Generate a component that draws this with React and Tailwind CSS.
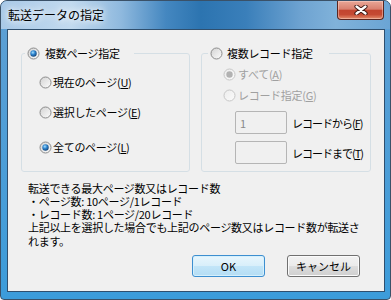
import { useId } from "react";

const JP = "[font-family:'Noto_Sans_CJK_JP','Noto_Sans',sans-serif]";

function Radio({ checked, disabled }) {
  const id = useId().replace(/:/g, "");
  return (
    <svg width="13" height="13" viewBox="0 0 13 13" className="shrink-0">
      <defs>
        <linearGradient id={id + "b"} x1="0" y1="0" x2="1" y2="1">
          <stop offset="0" stopColor={disabled ? "#ececec" : "#d2d2d2"} />
          <stop offset="1" stopColor={disabled ? "#fbfbfb" : "#fdfdfd"} />
        </linearGradient>
        <radialGradient id={id + "d"} cx="0.4" cy="0.35" r="0.7">
          <stop offset="0" stopColor="#a9e1ff" />
          <stop offset="0.45" stopColor="#2f86d0" />
          <stop offset="1" stopColor="#143f70" />
        </radialGradient>
      </defs>
      <circle
        cx="6.5"
        cy="6.5"
        r="5.5"
        fill={`url(#${id}b)`}
        stroke={disabled ? "#c6c6c6" : "#8b8b8b"}
      />
      {checked && (
        <circle
          cx="6.5"
          cy="6.5"
          r="3.2"
          fill={disabled ? "#b2b2b2" : `url(#${id}d)`}
        />
      )}
    </svg>
  );
}

function Key({ c }) {
  return (
    <>
      (<u>{c}</u>)
    </>
  );
}

export default function App() {
  return (
    <div
      className={`w-[391px] h-[300px] flex flex-col border border-[#3a5168] rounded-t-[7px] rounded-b-[4px] overflow-hidden bg-[linear-gradient(180deg,#5f9fd3,#3c9cda)] text-black ${JP}`}
    >
      {/* title bar */}
      <div className="h-[28px] flex justify-between bg-[linear-gradient(90deg,#a9c9e7_0px,#c2daef_70px,#8fb9de_120px,#4487c0_165px,#2c74b0_200px,#3a7fba_245px,#6ea3d1_300px,#80b2da_335px,#6aa4d4_391px)]">
        <span className="pl-[7px] self-center text-[12px] leading-[16px] [text-shadow:0_0_6px_#fff,0_0_10px_#fff]">
          転送データの指定
        </span>
        <div className="mr-[6px] w-[47px] h-[19px] flex items-center justify-center border border-t-0 border-[#5a2620] rounded-b-[4px] bg-[linear-gradient(180deg,#e9a797_0%,#d9806f_45%,#c2452f_52%,#c54a33_75%,#e38d6c_100%)] shadow-[inset_0_0_0_1px_rgba(255,220,210,0.45)]">
          <svg width="14" height="10" viewBox="0 0 14 10">
            <path d="M2.5 1.5 L11.5 8.5 M11.5 1.5 L2.5 8.5" stroke="#3b1712" strokeWidth="4.2" strokeLinecap="round" />
            <path d="M2.5 1.5 L11.5 8.5 M11.5 1.5 L2.5 8.5" stroke="#ffffff" strokeWidth="2.3" strokeLinecap="round" />
          </svg>
        </div>
      </div>

      {/* client area */}
      <div className="flex-1 pl-[6px] pr-[5px] pb-[7px] flex">
        <div className="flex-1 border border-[#2f4f6e] bg-[#f0f0f0] flex flex-col text-[11px] leading-[16px] tracking-[-0.3px]">
          <div className="pt-[15px] pl-[13px] flex gap-[11px]">
            <fieldset className="w-[169px] h-[127px] min-w-0 border border-[#d5dfe5] rounded-[3px]">
              <legend className="ml-[3px] pl-[2px] pr-[14px]">
                <span className="flex items-center gap-[5px] h-[16px] whitespace-nowrap">
                  <Radio checked />
                  複数ページ指定
                </span>
              </legend>
              <div className="pl-[17px] flex flex-col whitespace-nowrap">
                <div className="mt-[13px] h-[16px] flex items-center gap-[1px]">
                  <Radio />
                  <span>現在のページ<Key c="U" /></span>
                </div>
                <div className="mt-[14px] h-[16px] flex items-center gap-[1px]">
                  <Radio />
                  <span>選択したページ<Key c="E" /></span>
                </div>
                <div className="mt-[19px] h-[16px] flex items-center gap-[1px]">
                  <Radio checked />
                  <span>全てのページ<Key c="L" /></span>
                </div>
              </div>
            </fieldset>

            <fieldset className="w-[170px] h-[127px] min-w-0 border border-[#d5dfe5] rounded-[3px]">
              <legend className="ml-[6px] pl-[2px] pr-[16px]">
                <span className="flex items-center gap-[4px] h-[16px] whitespace-nowrap">
                  <Radio />
                  複数レコード指定
                </span>
              </legend>
              <div className="flex flex-col text-[#a0a0a0] whitespace-nowrap">
                <div className="pl-[21px] mt-[5px] h-[16px] flex items-center gap-[2px]">
                  <Radio checked disabled />
                  <span>すべて<Key c="A" /></span>
                </div>
                <div className="pl-[21px] mt-[5px] h-[16px] flex items-center gap-[2px]">
                  <Radio disabled />
                  <span>レコード指定<Key c="G" /></span>
                </div>
                <div className="pl-[33px] mt-[8px] flex items-center gap-[5px]">
                  <div className="w-[52px] h-[23px] shrink-0 border border-[#b5b5b5] rounded-[2px] bg-[#f0f0f0] pl-[4px] flex items-center text-[#8a8a8a]">
                    1
                  </div>
                  <span className="text-black tracking-[-1px]">レコードから<Key c="F" /></span>
                </div>
                <div className="pl-[33px] mt-[7px] flex items-center gap-[5px]">
                  <div className="w-[52px] h-[23px] shrink-0 border border-[#b5b5b5] rounded-[2px] bg-[#f0f0f0]" />
                  <span className="text-black tracking-[-1px]">レコードまで<Key c="T" /></span>
                </div>
              </div>
            </fieldset>
          </div>

          <div className="mt-[9.5px] pl-[20px] leading-[13.25px] whitespace-nowrap">
            <div>転送できる最大ページ数又はレコード数</div>
            <div>・ページ数: 10ページ/1レコード</div>
            <div>・レコード数: 1ページ/20レコード</div>
            <div>上記以上を選択した場合でも上記のページ数又はレコード数が転送さ</div>
            <div>れます。</div>
          </div>

          <div className="mt-auto pb-[14px] pr-[24px] flex justify-end gap-[22px] tracking-normal">
            <button className="w-[73px] h-[22px] rounded-[3px] border border-[#3d8fd0] bg-[linear-gradient(180deg,#e8f6fd_0%,#d9effa_48%,#c2e5f8_52%,#b4ddf4_100%)] shadow-[inset_0_0_0_1px_#d6f0fc]">
              OK
            </button>
            <button className="w-[73px] h-[22px] rounded-[3px] border border-[#707070] bg-[linear-gradient(180deg,#f2f2f2_0%,#ebebeb_48%,#dddddd_52%,#cfcfcf_100%)] shadow-[inset_0_0_0_1px_#fbfbfb]">
              キャンセル
            </button>
          </div>
        </div>
      </div>
    </div>
  );
}
